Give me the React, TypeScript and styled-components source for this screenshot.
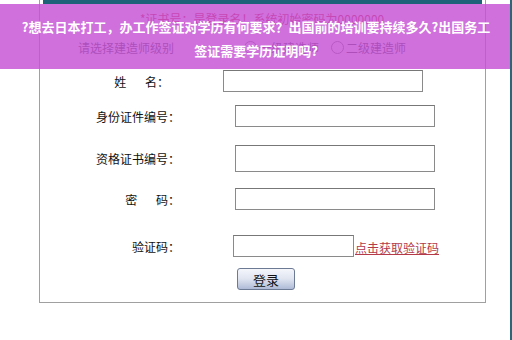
import styled, { createGlobalStyle } from "styled-components";

const GlobalStyle = createGlobalStyle`
  html, body {
    margin: 0;
    padding: 0;
    background: #fff;
  }
  body {
    font-family: "Liberation Sans", "Noto Sans CJK SC", sans-serif;
  }
`;

const Page = styled.div`
  position: relative;
  width: 512px;
  height: 340px;
  overflow: hidden;
  background: #fff;
  border-right: 2px solid #2a6878;
  box-sizing: border-box;
`;

const Frame = styled.div`
  margin-left: 39px;
  width: 447px;
  height: 303px;
  box-sizing: border-box;
  border: 1px solid #a0a0a0;
  border-top: none;
  display: flex;
  flex-direction: column;
`;

const TopBar = styled.div`
  height: 4px;
  margin: 0 3px;
  background: #1d6279;
`;

const Notice = styled.div`
  margin: 8px 0 0 100px;
  height: 14px;
  font-size: 12px;
  line-height: 14px;
  color: #d02020;
  font-family: "Noto Sans CJK SC", sans-serif;
`;

const LevelRow = styled.div`
  display: flex;
  align-items: center;
  margin: 12px 0 0 38px;
  height: 18px;
  font-size: 12px;
  color: #444;
  font-family: "Noto Sans CJK SC", sans-serif;
`;

const LevelLabel = styled.span`
  width: 166px;
`;

const Radio = styled.span`
  display: inline-flex;
  align-items: center;
  gap: 2px;
  margin-right: 12px;
  &::before {
    content: "";
    width: 11px;
    height: 11px;
    border: 1px solid #777;
    border-radius: 50%;
    background: #fff;
  }
`;

const Form = styled.div`
  display: flex;
  flex-direction: column;
  margin-top: 5px;
`;

const Row = styled.div<{ $gap: number; $h: number }>`
  display: flex;
  align-items: center;
  height: ${(p) => p.$h}px;
  margin-top: ${(p) => p.$gap}px;
`;

const Label = styled.div<{ $w: number }>`
  width: ${(p) => p.$w}px;
  text-align: right;
  font-size: 12px;
  color: #111;
  font-family: "Noto Sans CJK SC", sans-serif;
  white-space: pre;
`;

const Input = styled.div<{ $x: number; $w: number }>`
  margin-left: ${(p) => p.$x}px;
  width: ${(p) => p.$w}px;
  height: 100%;
  box-sizing: border-box;
  border: 1px solid #8a8a8a;
  border-top-color: #777;
  background: #fff;
`;

const CodeLink = styled.a`
  margin-left: 1px;
  font-size: 12px;
  color: #b43a4a;
  text-decoration: underline;
  font-family: "Noto Sans CJK SC", sans-serif;
  align-self: flex-end;
  margin-bottom: 1px;
`;

const LoginButton = styled.button`
  margin-left: 197px;
  width: 58px;
  height: 22px;
  padding: 0;
  border: 1px solid #6c7a94;
  border-radius: 3px;
  background: linear-gradient(#f4f6fb, #dfe4f0 50%, #aebad6);
  font-size: 13px;
  color: #111;
  font-family: "Noto Sans CJK SC", sans-serif;
`;

const Banner = styled.div`
  position: absolute;
  left: 0;
  top: 4px;
  width: 512px;
  height: 65px;
  background: rgba(196, 80, 214, 0.82);
  display: flex;
  align-items: center;
  justify-content: center;
  text-align: center;
  box-sizing: border-box;
  padding: 5px 16px 0;
  color: #fff;
  font-weight: 700;
  font-size: 13px;
  line-height: 24px;
  font-family: "Noto Sans CJK SC", sans-serif;
`;

export default function App() {
  return (
    <>
      <GlobalStyle />
      <Page>
        <Frame>
          <TopBar />
          <Notice>*证书号：是登录名！系统初始密码为0000000</Notice>
          <LevelRow>
            <LevelLabel>请选择建造师级别</LevelLabel>
            <Radio>一级建造师</Radio>
            <Radio>二级建造师</Radio>
          </LevelRow>
          <Form>
            <Row $gap={9} $h={22}>
              <Label $w={129}>{"姓       名："}</Label>
              <Input $x={54} $w={200} />
            </Row>
            <Row $gap={13} $h={22}>
              <Label $w={140}>身份证件编号：</Label>
              <Input $x={55} $w={200} />
            </Row>
            <Row $gap={18} $h={27}>
              <Label $w={140}>资格证书编号：</Label>
              <Input $x={55} $w={200} />
            </Row>
            <Row $gap={16} $h={22}>
              <Label $w={140}>{"密       码："}</Label>
              <Input $x={55} $w={200} />
            </Row>
            <Row $gap={25} $h={22}>
              <Label $w={140}>验证码：</Label>
              <Input $x={53} $w={121} />
              <CodeLink>点击获取验证码</CodeLink>
            </Row>
            <Row $gap={11} $h={22}>
              <LoginButton>登录</LoginButton>
            </Row>
          </Form>
        </Frame>
        <Banner>
          ?想去日本打工，办工作签证对学历有何要求？出国前的培训要持续多久?出国务工签证需要学历证明吗?
        </Banner>
      </Page>
    </>
  );
}
